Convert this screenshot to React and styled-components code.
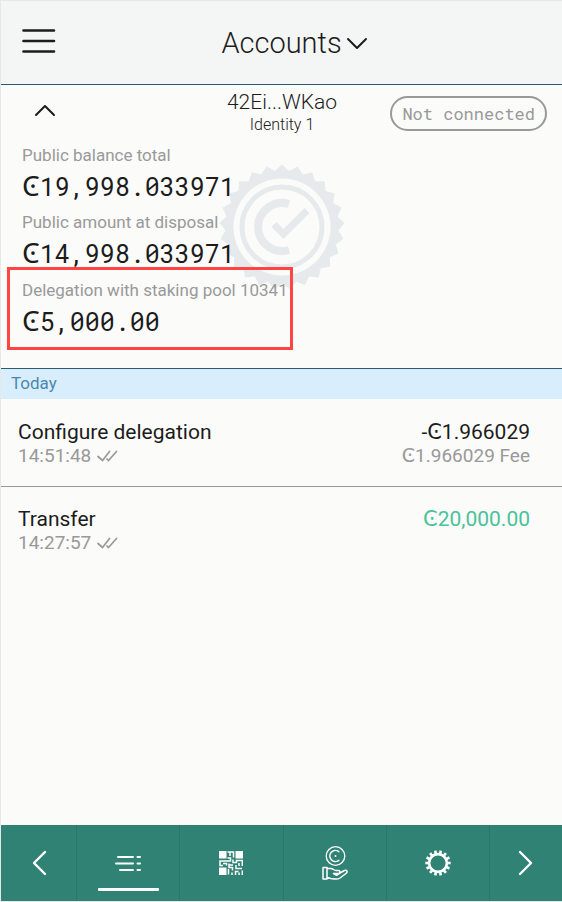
import React from "react";
import styled, { createGlobalStyle } from "styled-components";

const GlobalStyle = createGlobalStyle`
  * { box-sizing: border-box; }
  body {
    margin: 0;
    background: #fbfbf9;
    color: #1c1c1c;
    font-family: Roboto, "DejaVu Sans", sans-serif;
  }
  button { font: inherit; color: inherit; background: none; border: 0; padding: 0; cursor: pointer; }
  h1, h2, p, dl, dt, dd, ul { margin: 0; padding: 0; font-weight: inherit; }
  svg { display: block; }
`;

const Page = styled.div`
  min-height: 100vh;
  display: flex;
  flex-direction: column;
  border: 1px solid #e6e8e7;
  border-right: 0;
`;

const Header = styled.header`
  display: grid;
  grid-template-columns: 1fr auto 1fr;
  align-items: center;
  height: 84px;
  padding: 0 20px;
  background: #f4f6f5;
  border-bottom: 1px solid #2b5a73;
`;

const IconButton = styled.button`
  justify-self: start;
  margin-top: ${(p) => p.$top || 0}px;
`;

const TitleButton = styled.button`
  display: flex;
  align-items: center;
  gap: 4px;
  padding-left: 26px;
  font-size: 29px;
  font-weight: 300;
  line-height: 36px;
`;

const Account = styled.section`
  position: relative;
  height: 284px;
  border-bottom: 1px solid #2b5a73;
`;

const AccountTop = styled.div`
  display: grid;
  grid-template-columns: 1fr auto 1fr;
  align-items: start;
  padding: 4px 15px 0 32px;
`;

const AccountName = styled.div`
  text-align: center;
  font-weight: 300;
  margin-right: 16px;
`;

const Address = styled.h2`
  font-size: 21px;
  line-height: 26px;
`;

const Identity = styled.p`
  font-size: 16px;
  line-height: 20px;
`;

const Status = styled.span`
  justify-self: end;
  margin-top: 7px;
  padding: 0 10px;
  border: 2px solid #999;
  border-radius: 18px;
  color: #999;
  font-family: "Roboto Mono", "Liberation Mono", monospace;
  font-size: 17px;
  line-height: 31px;
`;

const Balances = styled.dl`
  position: relative;
  padding: 8px 0 0 21px;
`;

const Balance = styled.div`
  width: fit-content;
  height: 67px;
`;

const MarkedBalance = styled(Balance)`
  height: 83px;
  margin: -10px 0 0 -15px;
  padding: 8px 2px 0 12px;
  border: 3px solid #ff4444;
`;

const Label = styled.dt`
  color: #999;
  font-size: 17px;
  line-height: 24px;
`;

const Value = styled.dd`
  font-family: "Roboto Mono", "Liberation Mono", "DejaVu Sans Mono", monospace;
  font-size: 25px;
  line-height: 40px;
`;

const Coin = styled.span`
  font-family: "Noto Sans", "DejaVu Sans", sans-serif;
  font-size: 28px;
  font-weight: 400;
  line-height: 1;
`;

const SealMark = styled.svg`
  position: absolute;
  top: 79px;
  left: 50%;
  transform: translateX(-50%);
`;

const DayHeading = styled.h2`
  padding: 0 10px 2px;
  background: #d9eefc;
  color: #4a88b0;
  font-size: 17px;
  line-height: 28px;
`;

const TransactionList = styled.ul`
  flex: 1;
  list-style: none;
`;

const Transaction = styled.li`
  display: flex;
  justify-content: space-between;
  height: 87px;
  padding: 20px 32px 0 17px;
  & + & {
    padding-top: 19px;
    border-top: 1px solid #999;
  }
`;

const Column = styled.div`
  text-align: ${(p) => (p.$end ? "right" : "left")};
`;

const Primary = styled.p`
  color: ${(p) => (p.$incoming ? "#4ac29a" : "#1c1c1c")};
  font-size: 21px;
  line-height: 26px;
`;

const Secondary = styled.p`
  display: flex;
  align-items: center;
  gap: 6px;
  width: fit-content;
  margin-left: ${(p) => (p.$end ? "auto" : "0")};
  color: #999;
  font-size: 19px;
  line-height: 21px;
`;

const Nav = styled.nav`
  display: grid;
  grid-template-columns: 0.73fr repeat(4, 1fr) 0.71fr;
  height: 76px;
  background: #308274;
  color: #fff;
`;

const NavButton = styled.button`
  position: relative;
  display: grid;
  place-items: center;
  & + & { border-left: 1px solid #2a766a; }
`;

const ActiveBar = styled.span`
  position: absolute;
  bottom: 10px;
  left: 20%;
  right: 20%;
  height: 3px;
  border-radius: 1px;
  background: #fff;
`;

function Chevron({ points, width, height, stroke = 2 }) {
  return (
    <svg width={width} height={height} fill="none" stroke="currentColor" strokeWidth={stroke} strokeLinecap="round" strokeLinejoin="round" aria-hidden="true">
      <polyline points={points} />
    </svg>
  );
}

function MenuIcon() {
  return (
    <svg width="36" height="28" stroke="#1c1c1c" strokeWidth="2.6" strokeLinecap="round" aria-hidden="true">
      <path d="M2.5 3.5H33M2.5 14H33M2.5 24.5H33" />
    </svg>
  );
}

const SPIKES = 25;
const sealPoints = Array.from({ length: SPIKES * 2 }, (_, i) => {
  const r = i % 2 ? 56.5 : 62.5;
  const a = (Math.PI * i) / SPIKES - Math.PI / 2;
  return `${(63 + r * Math.cos(a)).toFixed(1)},${(63 + r * Math.sin(a)).toFixed(1)}`;
}).join(" ");

function Seal() {
  return (
    <SealMark width="126" height="126" fill="none" stroke="#e6eaed" aria-hidden="true">
      <polygon points={sealPoints} fill="#e6eaed" stroke="none" />
      <circle cx="63" cy="63" r="48.5" fill="#fbfbf9" stroke="none" />
      <circle cx="63" cy="63" r="40" strokeWidth="5" />
      <path d="M70 40A24 24 0 1 0 70 86" strokeWidth="8" />
      <path d="M55 60.500L64.500 70L88 46.500" strokeWidth="7" strokeLinejoin="miter" />
    </SealMark>
  );
}

function DoubleCheck() {
  return (
    <svg width="21" height="12" fill="none" stroke="currentColor" strokeWidth="1.7" strokeLinecap="round" aria-label="Finalized" role="img">
      <path d="M1 6.500L5.500 10.500L12.500 1.500M10 9L11.500 10.500L19.500 1.500" />
    </svg>
  );
}

function ListIcon() {
  return (
    <svg width="28" height="18" stroke="currentColor" strokeWidth="2" strokeLinecap="round" aria-hidden="true">
      <path d="M4 3H19M2 9.500H19M6 16H19M23.500 3H26M23.500 9.500H26M23.500 16H26" />
    </svg>
  );
}

function CodeIcon() {
  return (
    <svg width="24" height="24" fill="none" stroke="currentColor" strokeWidth="1.5" aria-hidden="true">
      <path d="M0 0h7.500v7.500h-7.500zM16.500 0h7.500v7.500h-7.500zM0 16.500h7.500v7.500h-7.500z" fill="currentColor" stroke="none" />
      <path d="M8.500 1H11V5M11 1H14.500V6.500M8.500 7H11.500V10H1V14.500H4M4 12.500H7.500V14.500M14 8.500V11.500H17.500V9.500H23.300V15M20 12V15M10 12.500V16.500H13.500V19.500M10 14H14M17 14V17.500H23M9.500 18V23.500M13 21.500V24M16.500 24V20.500H19.500M20 24V21.500M23.300 19.500V24" />
    </svg>
  );
}

function StakingIcon() {
  return (
    <svg width="28" height="36" fill="none" stroke="currentColor" strokeWidth="1.3" strokeLinejoin="round" strokeLinecap="round" aria-hidden="true">
      <circle cx="14.500" cy="11" r="9.300" />
      <path d="M17.800 6.700A5.500 5.500 0 1 0 17.800 15.300" strokeWidth="1.600" />
      <circle cx="14.500" cy="11" r="1" fill="currentColor" stroke="none" />
      <path d="M2 22.500H6V34H2ZM6 23.500H10C12 23.500 13 25.500 15 25.500H17.500C19.500 25.500 19.500 28.500 17.500 28.500H12.500M19 28L23.500 25.500C26 24.500 27 27 25 28.500L19 33C16 35 11 34 6 32.500M12.500 28.500L15.500 30.300L19 28" strokeWidth="1.500" />
    </svg>
  );
}

function GearIcon() {
  return (
    <svg width="28" height="28" fill="none" stroke="currentColor" aria-hidden="true">
      <circle cx="14" cy="14" r="8.900" strokeWidth="2.600" />
      {Array.from({ length: 14 }, (_, i) => (
        <path key={i} d="M14 1.300V6" strokeWidth="2.600" transform={`rotate(${(i + 0.5) * (360 / 14)} 14 14)`} />
      ))}
    </svg>
  );
}

const balances = [
  { label: "Public balance total", value: "19,998.033971" },
  { label: "Public amount at disposal", value: "14,998.033971" },
  { label: "Delegation with staking pool 10341", value: "5,000.00", marked: true },
];

const transactions = [
  { name: "Configure delegation", time: "14:51:48", amount: "-Ͼ1.966029", fee: "Ͼ1.966029 Fee" },
  { name: "Transfer", time: "14:27:57", amount: "Ͼ20,000.00", incoming: true },
];

export default function App() {
  return (
    <>
      <GlobalStyle />
      <Page>
        <Header>
          <IconButton aria-label="Menu" $top={-3}><MenuIcon /></IconButton>
          <h1>
            <TitleButton>
              Accounts
              <Chevron width={22} height={14} points="2,3 11,12 20,3" />
            </TitleButton>
          </h1>
        </Header>
        <Account>
          <Seal />
          <AccountTop>
            <IconButton aria-label="Collapse account" $top={14}>
              <Chevron width={24} height={14} points="3,12 12,3 21,12" />
            </IconButton>
            <AccountName>
              <Address>42Ei...WKao</Address>
              <Identity>Identity 1</Identity>
            </AccountName>
            <Status>Not connected</Status>
          </AccountTop>
          <Balances>
            {balances.map(({ label, value, marked }) => {
              const Item = marked ? MarkedBalance : Balance;
              return (
                <Item key={label}>
                  <Label>{label}</Label>
                  <Value><Coin>Ͼ</Coin>{value}</Value>
                </Item>
              );
            })}
          </Balances>
        </Account>
        <DayHeading>Today</DayHeading>
        <TransactionList>
          {transactions.map((t) => (
            <Transaction key={t.time}>
              <Column>
                <Primary>{t.name}</Primary>
                <Secondary>{t.time}<DoubleCheck /></Secondary>
              </Column>
              <Column $end>
                <Primary $incoming={t.incoming}>{t.amount}</Primary>
                {t.fee && <Secondary $end>{t.fee}</Secondary>}
              </Column>
            </Transaction>
          ))}
        </TransactionList>
        <Nav>
          <NavButton aria-label="Previous"><Chevron width={16} height={26} points="14,2 3,13 14,24" stroke={2.4} /></NavButton>
          <NavButton aria-label="Transactions"><ListIcon /><ActiveBar /></NavButton>
          <NavButton aria-label="Address code"><CodeIcon /></NavButton>
          <NavButton aria-label="Staking"><StakingIcon /></NavButton>
          <NavButton aria-label="Settings"><GearIcon /></NavButton>
          <NavButton aria-label="Next"><Chevron width={16} height={26} points="2,2 13,13 2,24" stroke={2.4} /></NavButton>
        </Nav>
      </Page>
    </>
  );
}
